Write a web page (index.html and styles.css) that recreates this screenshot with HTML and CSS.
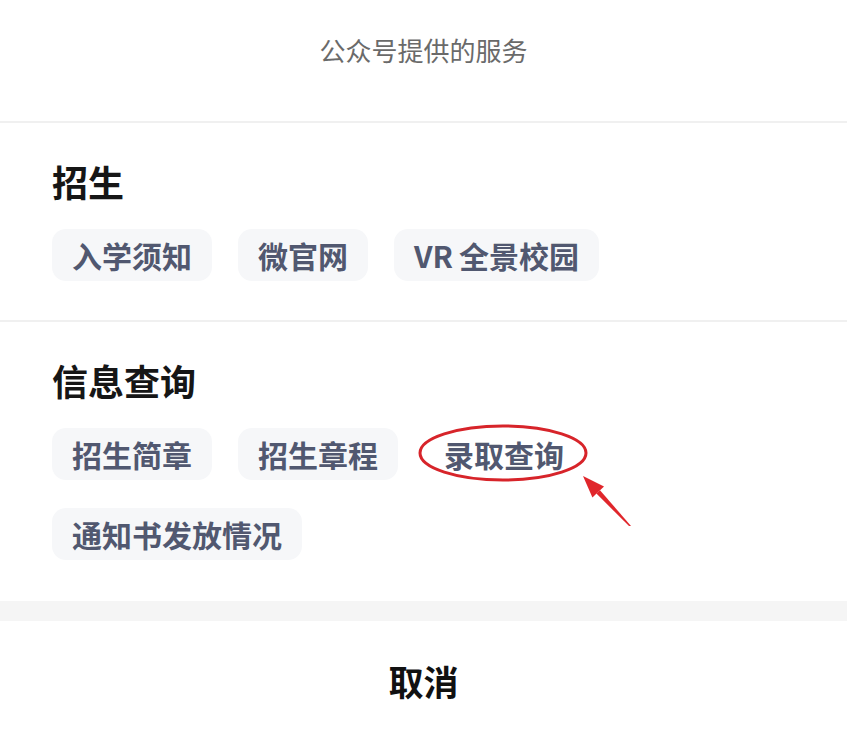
FILE: index.html
```html
<!DOCTYPE html>
<html lang="zh-CN">
  <head>
    <meta charset="UTF-8" />
    <meta name="viewport" content="width=device-width, initial-scale=1.0" />
    <title>公众号提供的服务</title>
    <link rel="stylesheet" href="styles.css">
  </head>
  <body>
    <header class="sheet-header">
      <h1>公众号提供的服务</h1>
    </header>
    <section class="group">
      <h2>招生</h2>
      <div class="chips">
        <span class="chip">入学须知</span>
        <span class="chip">微官网</span>
        <span class="chip"><span class="latin">VR</span>全景校园</span>
      </div>
    </section>
    <section class="group">
      <h2>信息查询</h2>
      <div class="chips">
        <span class="chip">招生简章</span>
        <span class="chip">招生章程</span>
        <span class="chip marked">录取查询
          <svg class="mark" width="230" height="115" viewBox="0 0 230 115">
            <ellipse cx="87" cy="33" rx="83" ry="27" fill="none" stroke="#d7242a" stroke-width="3" />
            <polygon points="215,106 213,106 180.4,73.6 184,70.2" fill="#e0262b" />
            <polygon points="167,56 188,66.4 176.4,77.4" fill="#e0262b" />
          </svg>
        </span>
        <span class="chip">通知书发放情况</span>
      </div>
    </section>
    <div class="band"></div>
    <button class="cancel">取消</button>
  </body>
</html>
```

FILE: styles.css
```css
* {
  box-sizing: border-box;
  margin: 0;
  padding: 0;
  font-family: "Noto Sans CJK SC", "Noto Sans", sans-serif;
}
body {
  background-color: #fff;
  width: 847px;
}
.sheet-header {
  height: 123px;
  padding-top: 37px;
  border-bottom: 2px solid #f0f0f0;
  text-align: center;
}
.sheet-header h1 {
  font-size: 26px;
  line-height: 26px;
  font-weight: 400;
  color: #6a6a6a;
}
.group {
  padding: 40px 52px 39px;
  border-bottom: 2px solid #f0f0f0;
}
.group:last-of-type {
  padding-bottom: 41px;
  border-bottom: none;
}
.group h2 {
  font-size: 36px;
  line-height: 36px;
  font-weight: 700;
  color: #161616;
  margin-bottom: 30px;
}
.chips {
  display: flex;
  flex-wrap: wrap;
  column-gap: 26px;
  row-gap: 28px;
}
.chip {
  position: relative;
  height: 52px;
  padding: 0 20px;
  border-radius: 14px;
  background-color: #f6f7f9;
  font-size: 30px;
  line-height: 52px;
  font-weight: 600;
  color: #515870;
}
.chip .latin {
  margin-right: 6px;
}
.chip.marked {
  background-color: transparent;
}
.mark {
  position: absolute;
  left: -8px;
  top: -8px;
  pointer-events: none;
}
.band {
  height: 20px;
  background-color: #f5f5f5;
}
.cancel {
  display: block;
  width: 100%;
  height: 118px;
  border: none;
  background-color: #fff;
  font-size: 35px;
  font-weight: 700;
  color: #111;
}
```
